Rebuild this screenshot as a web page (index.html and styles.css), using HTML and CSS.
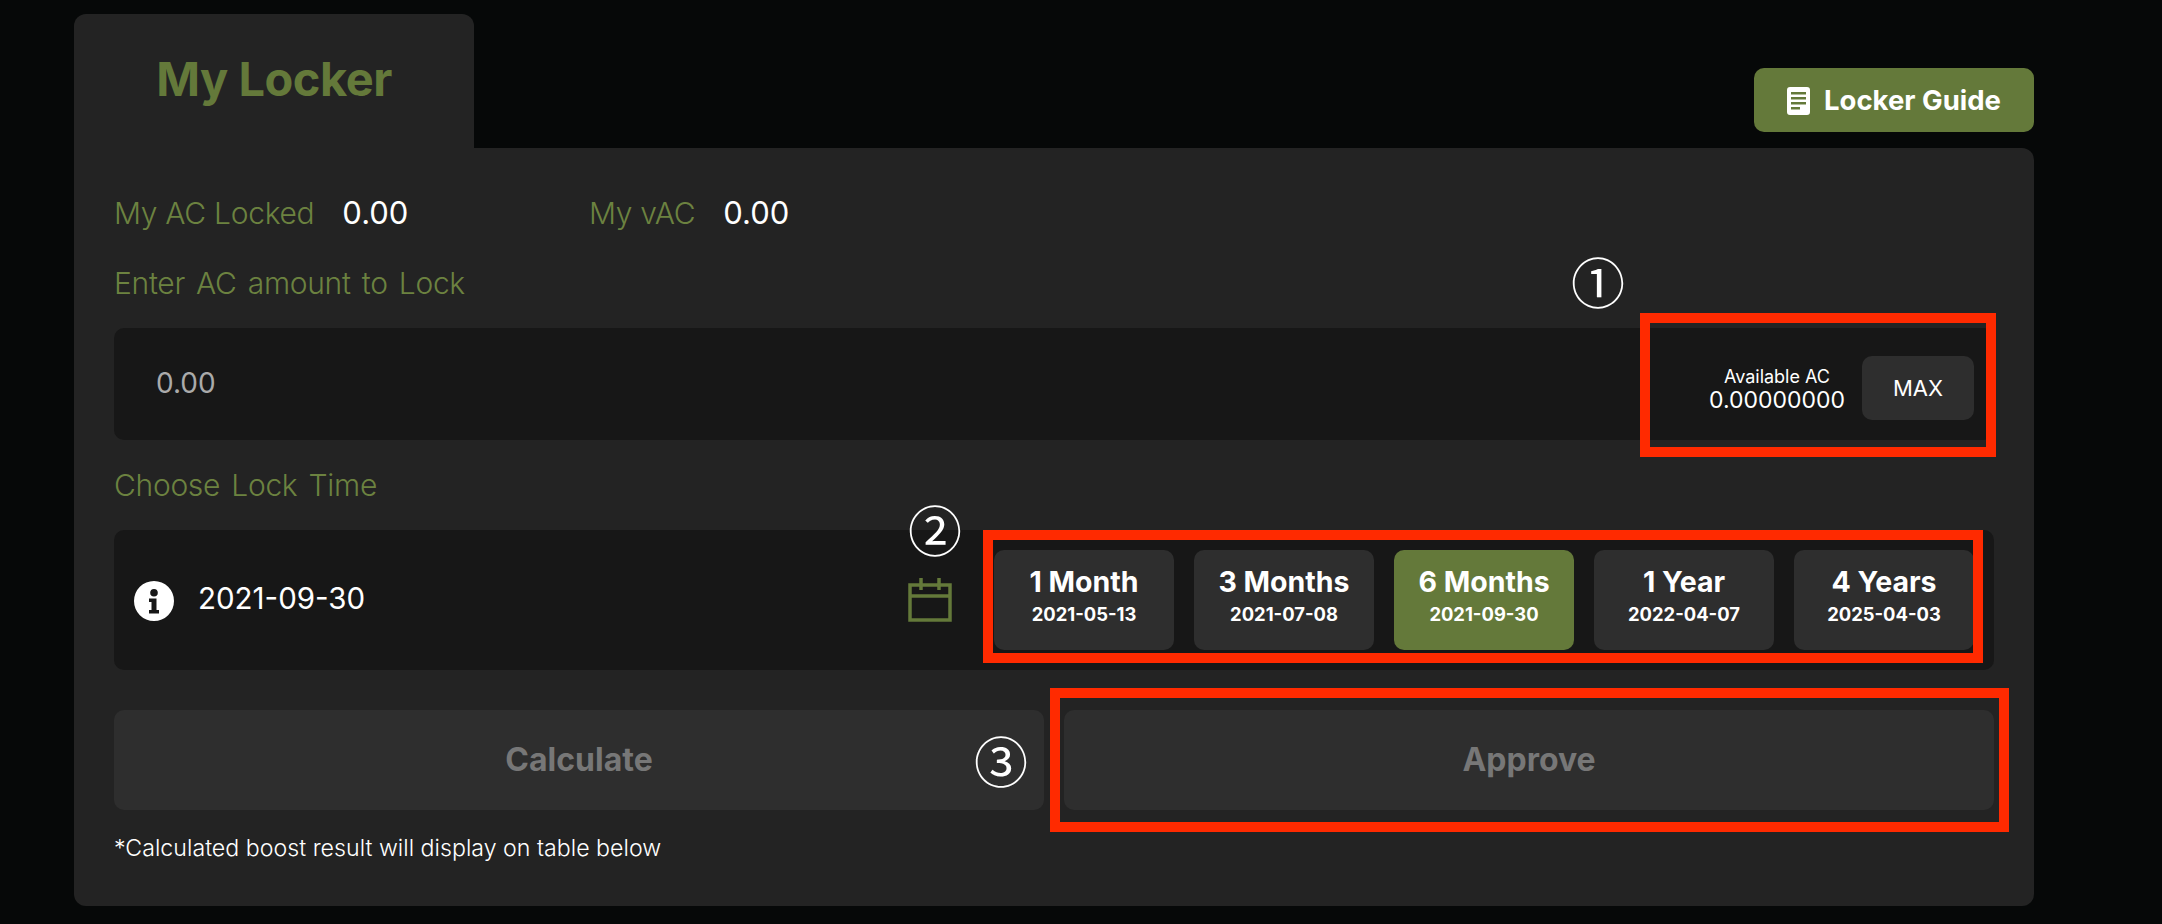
FILE: index.html
```html
<!DOCTYPE html>
<html lang="en">
  <head>
    <meta charset="UTF-8" />
    <meta name="viewport" content="width=device-width, initial-scale=1.0" />
    <title>My Locker</title>
    <link rel="stylesheet" href="styles.css">
  </head>
  <body>
    <div class="page">
      <div class="page-header">
        <h1 class="tab">My Locker</h1>
        <button class="guide-btn">
          <svg class="guide-icon" viewBox="0 0 23 28" width="23" height="28">
            <path fill="#fff" fill-rule="evenodd" d="M3 0h17a3 3 0 0 1 3 3v22a3 3 0 0 1-3 3H3a3 3 0 0 1-3-3V3a3 3 0 0 1 3-3zM4 5v2.500h15V5zM4 10v2.500h15V10zM4 15v2.500h15V15zM4 20v2.500h9V20z" />
          </svg>
          Locker Guide
        </button>
      </div>

      <div class="panel">
        <div class="stats">
          <div class="stat">
            <span class="stat-label">My AC Locked</span>
            <span class="stat-value">0.00</span>
          </div>
          <div class="stat">
            <span class="stat-label">My vAC</span>
            <span class="stat-value">0.00</span>
          </div>
        </div>

        <div class="field-label">Enter AC amount to Lock</div>
        <div class="amount-box">
          <span class="amount">0.00</span>
          <div class="available">
            <span class="available-label">Available AC</span>
            <span class="available-value">0.00000000</span>
          </div>
          <button class="max-btn">MAX</button>
        </div>

        <div class="field-label">Choose Lock Time</div>
        <div class="time-box">
          <svg class="info-icon" viewBox="0 0 40 40" width="40" height="40">
            <path fill="#fff" fill-rule="evenodd" d="M20 0a20 20 0 1 1 0 40a20 20 0 0 1 0-40zM20 8a3.800 3.800 0 1 0 0 7.600a3.800 3.800 0 0 0 0-7.600zM15 17.500v3.500h2.500v8H15v3.500h10V29h-2.500V17.500z" />
          </svg>
          <span class="time-date">2021-09-30</span>
          <svg class="calendar-icon" viewBox="0 0 44 44" width="44" height="44">
            <path fill="none" stroke="#64793a" stroke-width="3.500" d="M2 7h40v35H2zM2 18h40M13 0v12M31 0v12" />
          </svg>
          <div class="durations">
            <button class="duration"><b>1 Month</b><small>2021-05-13</small></button>
            <button class="duration"><b>3 Months</b><small>2021-07-08</small></button>
            <button class="duration selected"><b>6 Months</b><small>2021-09-30</small></button>
            <button class="duration"><b>1 Year</b><small>2022-04-07</small></button>
            <button class="duration"><b>4 Years</b><small>2025-04-03</small></button>
          </div>
        </div>

        <div class="actions">
          <button class="action-btn">Calculate</button>
          <button class="action-btn">Approve</button>
        </div>

        <p class="note">*Calculated boost result will display on table below</p>
      </div>

      <!-- red annotations drawn over the screenshot -->
      <div class="mark mark-max"></div>
      <div class="mark mark-time"></div>
      <div class="mark mark-approve"></div>
      <span class="step step-1">①</span>
      <span class="step step-2">②</span>
      <span class="step step-3">③</span>
    </div>
  </body>
</html>
```

FILE: styles.css
```css
* {
  box-sizing: border-box;
}
body {
  margin: 0;
  height: 924px;
  overflow: hidden;
  background-color: #060808;
  font-family: "Inter", "Liberation Sans", sans-serif;
  color: #fff;
}
button {
  font-family: inherit;
  border: none;
  color: #fff;
  cursor: pointer;
}
.page {
  position: relative;
  width: 1960px;
  margin: 14px 0 0 74px;
}

.page-header {
  display: flex;
  justify-content: space-between;
  align-items: flex-end;
  height: 134px;
}
.tab {
  width: 400px;
  height: 134px;
  margin: 0;
  padding-top: 39px;
  background-color: #232323;
  border-radius: 12px 12px 0 0;
  color: #64793a;
  font-size: 47px;
  line-height: 52px;
  font-weight: 700;
  letter-spacing: -0.5px;
  text-align: center;
}
.guide-btn {
  display: flex;
  align-items: center;
  justify-content: center;
  gap: 14px;
  width: 280px;
  height: 64px;
  margin-bottom: 16px;
  padding-bottom: 2px;
  background-color: #64793a;
  border-radius: 10px;
  font-size: 27.500px;
  font-weight: 700;
}
.guide-icon {
  margin-top: 2px;
}
.panel {
  height: 758px;
  padding: 48px 40px 0 40px;
  background-color: #232323;
  border-radius: 0 0 12px 12px;
  border-top-right-radius: 12px;
}

.stats {
  display: flex;
  height: 34px;
  margin-bottom: 36px;
}
.stat {
  display: flex;
  align-items: center;
  gap: 28px;
  width: 475px;
  line-height: 34px;
}
.stat-label,
.field-label {
  color: #6c8240;
  font-size: 30px;
  font-weight: 300;
}
.stat-label {
  letter-spacing: -0.300px;
}
.stat-value {
  font-size: 31px;
  font-weight: 400;
}
.field-label {
  height: 34px;
  margin-bottom: 28px;
  letter-spacing: -0.300px;
  word-spacing: 3px;
  line-height: 34px;
}

.amount-box {
  display: flex;
  align-items: center;
  height: 112px;
  margin-bottom: 28px;
  padding: 0 20px 0 42px;
  background-color: #171717;
  border-radius: 10px;
}
.amount {
  margin: -2px auto 0 0;
  color: #aaa;
  font-size: 28px;
}
.available {
  display: flex;
  flex-direction: column;
  align-items: center;
  margin: 10px 17px 0 0;
}
.available-label {
  font-size: 18px;
  line-height: 22px;
}
.available-value {
  font-size: 23px;
  line-height: 24px;
}
.max-btn {
  width: 112px;
  height: 64px;
  margin-top: 8px;
  background-color: #2e2e2e;
  border-radius: 10px;
  font-size: 22px;
}

.time-box {
  display: flex;
  align-items: center;
  height: 140px;
  margin-bottom: 40px;
  padding: 0 20px 0 20px;
  background-color: #171717;
  border-radius: 10px;
}
.info-icon {
  flex: none;
  margin: 2px 24px 0 0;
}
.time-date {
  margin: -4px auto 0 0;
  font-size: 29.500px;
}
.calendar-icon {
  flex: none;
  margin-right: 42px;
}
.durations {
  display: flex;
  gap: 20px;
}
.duration {
  display: flex;
  flex-direction: column;
  align-items: center;
  width: 180px;
  height: 100px;
  padding-top: 15px;
  background-color: #2e2e2e;
  border-radius: 10px;
}
.duration.selected {
  background-color: #64793a;
}
.duration b {
  font-size: 28.500px;
  line-height: 34px;
  font-weight: 700;
}
.duration small {
  margin-top: 3px;
  font-size: 18.400px;
  line-height: 24px;
  font-weight: 700;
}

.actions {
  display: grid;
  grid-template-columns: 1fr 1fr;
  gap: 20px;
  margin-bottom: 25px;
}
.action-btn {
  height: 100px;
  padding-bottom: 2px;
  background-color: #2e2e2e;
  border-radius: 10px;
  color: #777;
  font-size: 32px;
  font-weight: 700;
}
.note {
  margin: 0;
  font-size: 23.200px;
  line-height: 26px;
  font-weight: 300;
}

/* annotations */
.mark {
  position: absolute;
  border: 10px solid #ff2a00;
}
.mark-max {
  left: 1566px;
  top: 299px;
  width: 356px;
  height: 144px;
}
.mark-time {
  left: 909px;
  top: 516px;
  width: 1000px;
  height: 133px;
}
.mark-approve {
  left: 976px;
  top: 674px;
  width: 959px;
  height: 144px;
}
.step {
  position: absolute;
  width: 60px;
  font-family: "Noto Sans CJK JP", "DejaVu Sans", sans-serif;
  font-size: 54px;
  line-height: 60px;
  text-align: center;
}
.step-1 {
  left: 1494px;
  top: 237px;
}
.step-2 {
  left: 831px;
  top: 485px;
}
.step-3 {
  left: 897px;
  top: 716px;
}
```
